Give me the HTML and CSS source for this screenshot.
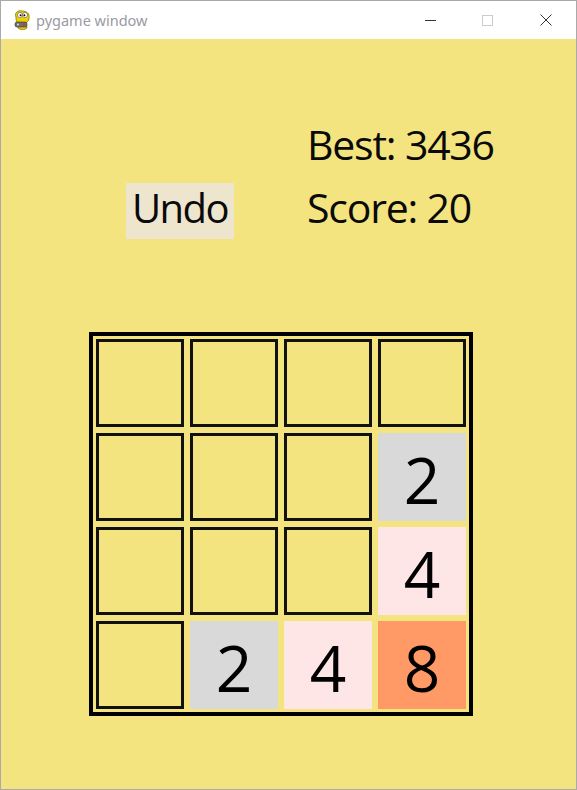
FILE: index.html
```html
<!DOCTYPE html>
<html>
<head>
<meta charset="utf-8">
<link rel="stylesheet" href="styles.css">
</head>
<body>
<div class="window">
  <div class="titlebar">
    <svg class="app-icon" width="20" height="22" viewBox="0 0 20 22">
      <path d="M4 8 C2 4 6 1 10 2 C15 2 18 5 17 9 C17 12 15 13 14 14 L15 19 C13 21 8 21 6 19 L6 14 C4 13 4 10 4 8 Z" fill="#f0d000" stroke="#8a7000" stroke-width="0.8"/>
      <circle cx="8" cy="6" r="2.6" fill="#fff" stroke="#555" stroke-width="0.6"/>
      <circle cx="13" cy="6" r="2.6" fill="#fff" stroke="#555" stroke-width="0.6"/>
      <circle cx="8.6" cy="6.3" r="1" fill="#000"/>
      <circle cx="12.4" cy="6.3" r="1" fill="#000"/>
      <rect x="3" y="13" width="12" height="5" rx="2" fill="#6e6e6e" stroke="#333" stroke-width="0.6"/>
      <circle cx="6" cy="15.5" r="1" fill="#ddd"/>
      <circle cx="12" cy="15.5" r="1" fill="#c33"/>
    </svg>
    <span class="title">pygame window</span>
    <div class="controls">
      <span class="ctl ctl-min"></span>
      <span class="ctl ctl-max"></span>
      <svg class="ctl ctl-close" width="12" height="12" viewBox="0 0 12 12">
        <path d="M0.5 0.5 L11.5 11.5 M11.5 0.5 L0.5 11.5" stroke="#333" stroke-width="1"/>
      </svg>
    </div>
  </div>
  <div class="content">
    <div class="header">
      <div class="undo">Undo</div>
      <div class="stats">
        <div class="stat">Best: 3436</div>
        <div class="stat">Score: 20</div>
      </div>
    </div>
    <div class="board">
      <div class="cell"></div>
      <div class="cell"></div>
      <div class="cell"></div>
      <div class="cell"></div>
      <div class="cell"></div>
      <div class="cell"></div>
      <div class="cell"></div>
      <div class="tile t2">2</div>
      <div class="cell"></div>
      <div class="cell"></div>
      <div class="cell"></div>
      <div class="tile t4">4</div>
      <div class="cell"></div>
      <div class="tile t2">2</div>
      <div class="tile t4">4</div>
      <div class="tile t8">8</div>
    </div>
  </div>
</div>
</body>
</html>
```

FILE: styles.css
```css
html, body {
  margin: 0;
  padding: 0;
}
body {
  font-family: "Open Sans", "Noto Sans", sans-serif;
  background: #ffffff;
}
.window {
  box-sizing: border-box;
  width: 577px;
  height: 790px;
  border: 1px solid #aaaaaa;
  display: flex;
  flex-direction: column;
  background: #f4e480;
}
.titlebar {
  box-sizing: border-box;
  height: 38px;
  background: #ffffff;
  display: flex;
  align-items: center;
  padding-left: 11px;
  flex-shrink: 0;
}
.app-icon {
  display: block;
  margin-top: -1px;
}
.title {
  margin-left: 4px;
  font-size: 14.5px;
  color: #9a9aa2;
  font-family: "Noto Sans", "Open Sans", sans-serif;
  margin-top: -1px;
}
.controls {
  margin-left: auto;
  display: flex;
  align-items: center;
  height: 100%;
}
.ctl {
  display: block;
}
.ctl-min {
  width: 11px;
  height: 1px;
  background: #333;
  margin-right: 46px;
}
.ctl-max {
  box-sizing: border-box;
  width: 11px;
  height: 11px;
  border: 1px solid #cccccc;
  margin-right: 47px;
}
.ctl-close {
  margin-right: 24px;
}
.content {
  flex: 1;
  padding-top: 74px;
}
.header {
  display: flex;
  align-items: flex-end;
  padding-left: 125px;
  color: #0a0a0a;
}
.undo {
  width: 108px;
  box-sizing: border-box;
  height: 56px;
  line-height: 50px;
  font-size: 40px;
  letter-spacing: -1.5px;
  background: #ede5cd;
  text-align: center;
}
.stats {
  margin-left: 73px;
}
.stat {
  font-size: 41px;
  line-height: 63px;
  letter-spacing: -1.2px;
  white-space: nowrap;
}
.board {
  margin-top: 93px;
  margin-left: 88px;
  width: 384px;
  box-sizing: border-box;
  border: 4px solid #000;
  padding: 3px;
  display: grid;
  grid-template-columns: repeat(4, 88px);
  grid-auto-rows: 88px;
  gap: 6px;
}
.cell {
  box-sizing: border-box;
  border: 3px solid #111;
}
.tile {
  display: flex;
  align-items: center;
  justify-content: center;
  font-size: 64px;
  color: #000;
  padding-top: 4px;
  box-sizing: border-box;
}
.t2 { background: #d9d9d9; }
.t4 { background: #ffe6e6; }
.t8 { background: #ff9966; }
```
